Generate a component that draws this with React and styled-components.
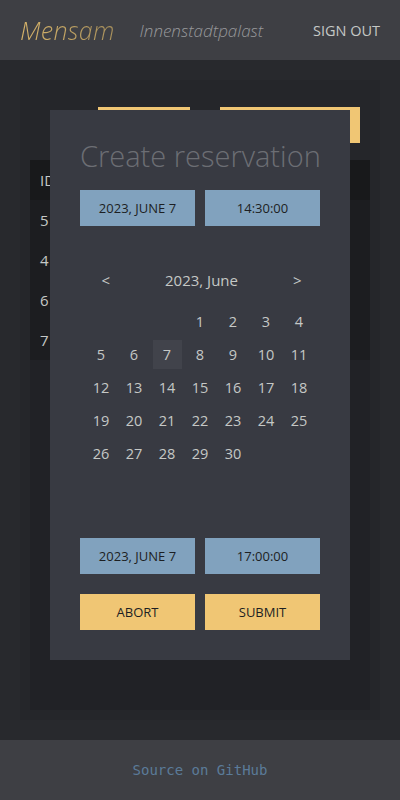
import React from "react";
import styled, { createGlobalStyle } from "styled-components";

const Global = createGlobalStyle`
  html, body { margin: 0; padding: 0; background: #28292d; }
  body { font-family: "Open Sans", "Noto Sans", sans-serif; color: #c5c8c6; }
  * { box-sizing: border-box; }
`;

const Page = styled.div`
  width: 400px;
  height: 800px;
  display: flex;
  flex-direction: column;
  position: relative;
  background: #28292d;
`;

const Header = styled.header`
  height: 60px;
  background: #3e3f44;
  display: flex;
  align-items: center;
  padding: 0 20px;
`;

const Brand = styled.span`
  font-style: italic;
  font-weight: 300;
  font-size: 25px;
  letter-spacing: 0.3px;
  background: linear-gradient(90deg, #d7b46a, #a8905c);
  -webkit-background-clip: text;
  background-clip: text;
  color: transparent;
`;

const Space = styled.span`
  margin-left: 25px;
  font-style: italic;
  font-weight: 300;
  font-size: 17px;
  color: #97989b;
`;

const SignOut = styled.span`
  margin-left: auto;
  font-size: 14.5px;
  color: #c5c8c6;
`;

const Main = styled.main`
  flex: 1;
  padding: 20px;
  display: flex;
`;

const Outer = styled.div`
  flex: 1;
  background: #25262a;
  padding: 27px 10px 10px;
  display: flex;
  flex-direction: column;
`;

const TopButtons = styled.div`
  display: flex;
  justify-content: flex-end;
  gap: 30px;
  padding-right: 10px;
  height: 36px;
`;

const BgButton = styled.div`
  width: ${(p) => p.w}px;
  background: #f0c674;
`;

const TableArea = styled.div`
  margin-top: 17px;
  flex: 1;
  background: #212226;
`;

const Row = styled.div`
  height: 40px;
  display: flex;
  align-items: center;
  padding-left: 10px;
  font-size: 15px;
  background: ${(p) => (p.head ? "#18191b" : "#1c1d20")};
  color: #c5c8c6;
`;

const Footer = styled.footer`
  height: 60px;
  background: #3e3f44;
  display: flex;
  align-items: center;
  justify-content: center;
  font-family: "DejaVu Sans Mono", monospace;
  font-size: 14px;
  color: #5b7b99;
`;

const Modal = styled.div`
  position: absolute;
  left: 50px;
  top: 110px;
  width: 300px;
  height: 550px;
  background: #383a42;
  padding: 26px 30px 30px;
  display: flex;
  flex-direction: column;
`;

const Title = styled.h1`
  margin: 0;
  font-weight: 200;
  font-size: 29px;
  line-height: 40px;
  color: #6c6e74;
  text-align: center;
  white-space: nowrap;
`;

const PairRow = styled.div`
  display: flex;
  gap: 10px;
  margin-top: ${(p) => p.mt}px;
`;

const Btn = styled.div`
  flex: 1;
  height: 36px;
  display: flex;
  align-items: center;
  justify-content: center;
  font-size: 13px;
  font-weight: 500;
  text-transform: uppercase;
  color: #1d1f23;
  background: ${(p) => (p.yellow ? "#f0c674" : "#81a2be")};
`;

const Calendar = styled.div`
  height: 312px;
  display: flex;
  flex-direction: column;
  align-items: center;
  padding-top: 40px;
`;

const CalHead = styled.div`
  width: 227px;
  height: 28px;
  display: flex;
  align-items: center;
  justify-content: space-between;
  padding: 0 12px 0 15px;
  font-size: 15px;
`;

const Grid = styled.div`
  margin-top: 13px;
  display: grid;
  grid-template-columns: repeat(7, 29px);
  grid-auto-rows: 29px;
  gap: 4px;
`;

const Day = styled.div`
  display: flex;
  align-items: center;
  justify-content: center;
  font-size: 14.5px;
  color: #c5c8c6;
  background: ${(p) => (p.sel ? "#41434b" : "transparent")};
`;

export default function App() {
  const days = [];
  for (let i = 0; i < 3; i++) days.push(null);
  for (let d = 1; d <= 30; d++) days.push(d);
  return (
    <Page>
      <Global />
      <Header>
        <Brand>Mensam</Brand>
        <Space>Innenstadtpalast</Space>
        <SignOut>SIGN OUT</SignOut>
      </Header>
      <Main>
        <Outer>
          <TopButtons>
            <BgButton w={92} />
            <BgButton w={140} />
          </TopButtons>
          <TableArea>
            <Row head>ID</Row>
            <Row>5</Row>
            <Row>4</Row>
            <Row>6</Row>
            <Row>7</Row>
          </TableArea>
        </Outer>
      </Main>
      <Footer>Source on GitHub</Footer>
      <Modal>
        <Title>Create reservation</Title>
        <PairRow mt={14}>
          <Btn>2023, June 7</Btn>
          <Btn>14:30:00</Btn>
        </PairRow>
        <Calendar>
          <CalHead>
            <span>&lt;</span>
            <span>2023, June</span>
            <span>&gt;</span>
          </CalHead>
          <Grid>
            {days.map((d, i) => (
              <Day key={i} sel={d === 7}>
                {d}
              </Day>
            ))}
          </Grid>
        </Calendar>
        <PairRow mt={0}>
          <Btn>2023, June 7</Btn>
          <Btn>17:00:00</Btn>
        </PairRow>
        <PairRow mt={20}>
          <Btn yellow>Abort</Btn>
          <Btn yellow>Submit</Btn>
        </PairRow>
      </Modal>
    </Page>
  );
}
